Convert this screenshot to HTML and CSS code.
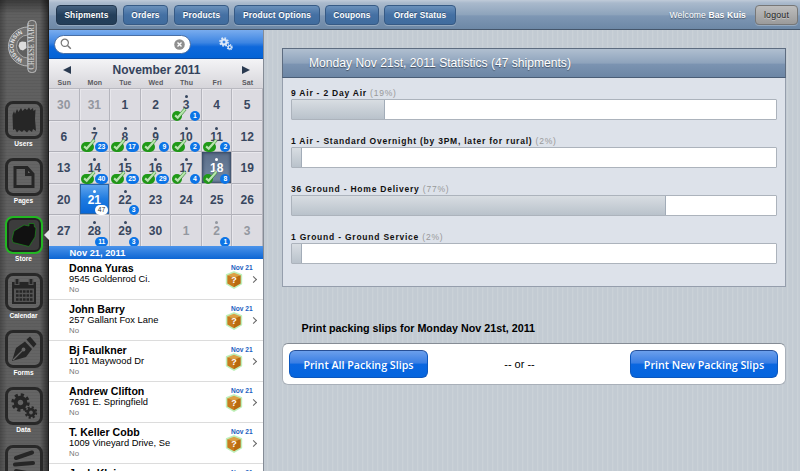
FILE: index.html
```html
<!DOCTYPE html>
<html lang="en">
<head>
<meta charset="utf-8">
<title>Shipments</title>
<link rel="stylesheet" href="styles.css">
</head>
<body>
<svg class="defs" width="0" height="0" aria-hidden="true">
  <defs>
    <symbol id="check" viewBox="0 0 15 13">
      <path d="M2.2 8.2 L5 10.6 L13.2 1" fill="none" stroke="#2d7a2a" stroke-width="3.4"/>
      <path d="M2.2 8 L5 10.4 L13.2 1" fill="none" stroke="#b5e6ab" stroke-width="2.4"/>
    </symbol>
    <symbol id="gear" viewBox="-10 -10 20 20">
      <circle r="5" fill="none" stroke="currentColor" stroke-width="4.2"/>
      <circle r="8" fill="none" stroke="currentColor" stroke-width="3.4" stroke-dasharray="3.3 2.983"/>
    </symbol>
    <symbol id="box" viewBox="0 0 20 20">
      <path d="M10 1.2 L18 4.4 V14 L10 18.8 L2 14 V4.4 Z" fill="#8fe08a" stroke="#a9eba4" stroke-width="2.2" stroke-linejoin="round" opacity=".75"/>
      <path d="M10 2 L17.4 4.8 L10 7.6 L2.6 4.8 Z" fill="#dda045"/>
      <path d="M2.6 4.8 L10 7.2 V18 L2.6 13.8 Z" fill="#c87a1c"/>
      <path d="M17.4 4.8 L10 7.2 V18 L17.4 13.8 Z" fill="#b9690f"/>
    </symbol>
  </defs>
</svg>

<div class="app">
  <nav class="side">
    <svg class="logo" viewBox="0 0 48 101" width="48" height="101">
      <path d="M28 27 A19.5 19.500 0 0 0 28 66 Z" fill="#727272" stroke="#b9b9b9" stroke-width="1"/>
      <path d="M28 35 A11.5 11.5 0 0 0 28 58 Z" fill="#606060" stroke="#b5b5b5" stroke-width=".8"/>
      <path d="M18.500 46 L19.500 42.500 L22 41.500 L26 42 L26.500 48 L23 50.500 L20 49.500 Z" fill="#dcdcdc"/>
      <rect x="27.8" y="20.5" width="8.4" height="52" rx="3.5" fill="#6c6c6c" stroke="#bdbdbd" stroke-width="1"/>
      <path id="arc" d="M27 60 A13.500 13.500 0 0 1 27 33" fill="none"/>
      <text class="logo-arc"><textPath href="#arc" startOffset="50%" text-anchor="middle">WISCONSIN</textPath></text>
      <text class="logo-text" transform="translate(34.4 46.5) rotate(-90)" text-anchor="middle" textLength="46" lengthAdjust="spacingAndGlyphs">CHEESE MART</text>
    </svg>
    <a class="side-item"><span class="tile"><svg viewBox="0 0 38 38"><path d="M8 29 L7.500 14 L9 10 L10 13 L12 8 L13.500 11 L16 7 L17.500 10 L20 7.500 L22 9 L24 6.500 L25.500 9 L28 7 L28.500 10 L30.500 8.500 L30 18 L31 30 L28 28 L27 31 L24 29 L22 31.500 L19 29 L17 31 L14 29 L12 31.500 L10 28 Z" fill="#262626"/></svg></span><span class="side-label">Users</span></a>
    <a class="side-item"><span class="tile"><svg viewBox="0 0 38 38"><path d="M10 9.500 H22 L28 16 V28.500 H10 Z M21.500 9.500 V16.500 H28" fill="none" stroke="#262626" stroke-width="3"/></svg></span><span class="side-label">Pages</span></a>
    <a class="side-item active"><span class="tile"><svg viewBox="0 0 38 38"><path d="M7 23 L9 15 L19 9 L24 10 L24 7.500 H29 L29.500 11 L31 12 L30 21 L24 30.500 L8 26.500 Z" fill="#111" stroke="#1a8a1a" stroke-width=".7"/></svg></span><span class="side-label">Store</span></a>
    <a class="side-item"><span class="tile"><svg viewBox="0 0 38 38"><path d="M7 9 H31 V31 H7 Z" fill="#262626"/><path d="M9 15.500 H29 V29 H9 Z" fill="#555"/><path d="M12 6 V12 M26 6 V12" stroke="#555" stroke-width="5"/><path d="M12 6 V11 M26 6 V11" stroke="#262626" stroke-width="2.6"/><path d="M11 18.500 H27.500 M11 22.500 H27.500 M11 26.500 H27.500" stroke="#262626" stroke-width="2.4" stroke-dasharray="2.600 .9"/></svg></span><span class="side-label">Calendar</span></a>
    <a class="side-item"><span class="tile"><svg viewBox="0 0 38 38"><path d="M7 31 L11 18 L20 11.500 L27 19 L21 27 Z" fill="#262626"/><path d="M21.500 9.500 L25 6.500 L31.500 14 L28.500 17.500 Z" fill="#262626"/><path d="M8 30 L17.500 20.500" stroke="#666" stroke-width="1.300"/><circle cx="18.500" cy="19.500" r="1.900" fill="#666"/></svg></span><span class="side-label">Forms</span></a>
    <a class="side-item"><span class="tile"><svg viewBox="0 0 38 38" color="#262626"><use href="#gear" x="6" y="6" width="19" height="19"/><use href="#gear" x="19.500" y="19" width="13" height="13"/></svg></span><span class="side-label">Data</span></a>
    <a class="side-item"><span class="tile"><svg viewBox="0 0 38 38"><path d="M11 13 L27 7.500 M10 19.500 L28 18 M11 26 L27 29" stroke="#262626" stroke-width="4" stroke-linecap="round"/></svg></span></a>
    <span class="pointer"></span>
  </nav>

  <div class="page">
    <header class="top">
      <a class="tab current w61">Shipments</a>
      <a class="tab w45">Orders</a>
      <a class="tab w55">Products</a>
      <a class="tab w85">Product Options</a>
      <a class="tab w54">Coupons</a>
      <a class="tab w71">Order Status</a>
      <span class="welcome">Welcome <b>Bas Kuis</b></span>
      <a class="logout">logout</a>
    </header>

    <div class="body">
      <section class="left">
        <div class="search">
          <div class="field">
            <svg width="12" height="12" viewBox="0 0 12 12"><circle cx="4.800" cy="4.800" r="3.600" fill="none" stroke="#777" stroke-width="1.200"/><path d="M7.500 7.500 L10.800 10.800" stroke="#777" stroke-width="1.500"/></svg>
            <svg width="11" height="11" viewBox="0 0 11 11"><circle cx="5.500" cy="5.500" r="5.300" fill="#8f8f8f"/><path d="M3.500 3.500 L7.500 7.500 M7.500 3.500 L3.500 7.500" stroke="#fff" stroke-width="1.400"/></svg>
          </div>
          <svg class="gears" width="14" height="14" viewBox="0 0 14 14"><use href="#gear" x="0" y="0" width="10" height="10"/><use href="#gear" x="7.500" y="7" width="6.500" height="6.500"/></svg>
        </div>

        <div class="cal-head">
          <div class="month"><span class="arrow prev"></span><span>November 2011</span><span class="arrow next"></span></div>
          <div class="days"><span>Sun</span><span>Mon</span><span>Tue</span><span>Wed</span><span>Thu</span><span>Fri</span><span>Sat</span></div>
        </div>

        <div class="grid">
          <div class="d out">30</div><div class="d out">31</div><div class="d">1</div><div class="d">2</div>
          <div class="d dot">3<i class="done one"><svg><use href="#check"/></svg></i><em>1</em></div><div class="d">4</div><div class="d">5</div>

          <div class="d">6</div>
          <div class="d dot">7<i class="done"><svg><use href="#check"/></svg></i><em>23</em></div>
          <div class="d dot">8<i class="done"><svg><use href="#check"/></svg></i><em>17</em></div>
          <div class="d dot">9<i class="done"><svg><use href="#check"/></svg></i><em>9</em></div>
          <div class="d dot">10<i class="done"><svg><use href="#check"/></svg></i><em>2</em></div>
          <div class="d dot">11<i class="done"><svg><use href="#check"/></svg></i><em>2</em></div>
          <div class="d">12</div>

          <div class="d">13</div>
          <div class="d dot">14<i class="done"><svg><use href="#check"/></svg></i><em>40</em></div>
          <div class="d dot">15<i class="done"><svg><use href="#check"/></svg></i><em>25</em></div>
          <div class="d dot">16<i class="done"><svg><use href="#check"/></svg></i><em>29</em></div>
          <div class="d dot">17<i class="done one"><svg><use href="#check"/></svg></i><em>4</em></div>
          <div class="d dot today">18<i class="done one"><svg><use href="#check"/></svg></i><em>8</em></div>
          <div class="d">19</div>

          <div class="d">20</div>
          <div class="d dot picked">21<em>47</em></div>
          <div class="d dot">22<em>3</em></div>
          <div class="d">23</div><div class="d">24</div><div class="d">25</div><div class="d">26</div>

          <div class="d">27</div>
          <div class="d dot">28<em>11</em></div>
          <div class="d dot">29<em>3</em></div>
          <div class="d">30</div><div class="d out">1</div>
          <div class="d dot out">2<em>1</em></div>
          <div class="d out">3</div>
        </div>

        <div class="date-bar">Nov 21, 2011</div>
        <div class="list">
          <div class="row"><div class="who"><b>Donna Yuras</b><span>9545 Goldenrod Ci.</span><small>No</small></div><div class="when">Nov 21<span class="pkg"><svg><use href="#box"/></svg><q>?</q></span></div><span class="chev"></span></div>
          <div class="row"><div class="who"><b>John Barry</b><span>257 Gallant Fox Lane</span><small>No</small></div><div class="when">Nov 21<span class="pkg"><svg><use href="#box"/></svg><q>?</q></span></div><span class="chev"></span></div>
          <div class="row"><div class="who"><b>Bj Faulkner</b><span>1101 Maywood Dr</span><small>No</small></div><div class="when">Nov 21<span class="pkg"><svg><use href="#box"/></svg><q>?</q></span></div><span class="chev"></span></div>
          <div class="row"><div class="who"><b>Andrew Clifton</b><span>7691 E. Springfield</span><small>No</small></div><div class="when">Nov 21<span class="pkg"><svg><use href="#box"/></svg><q>?</q></span></div><span class="chev"></span></div>
          <div class="row"><div class="who"><b>T. Keller Cobb</b><span>1009 Vineyard Drive, Se</span><small>No</small></div><div class="when">Nov 21<span class="pkg"><svg><use href="#box"/></svg><q>?</q></span></div><span class="chev"></span></div>
          <div class="row"><div class="who"><b>Josh Klein</b></div><div class="when">Nov 21</div></div>
        </div>
      </section>

      <main class="main">
        <section class="panel">
          <h1>Monday Nov 21st, 2011 Statistics (47 shipments)</h1>
          <div class="stats">
            <div class="stat"><p>9 Air - 2 Day Air <span>(19%)</span></p><div class="bar"><div class="fill" style="width:19.2%"></div></div></div>
            <div class="stat"><p>1 Air - Standard Overnight (by 3PM, later for rural) <span>(2%)</span></p><div class="bar"><div class="fill" style="width:2.1%"></div></div></div>
            <div class="stat"><p>36 Ground - Home Delivery <span>(77%)</span></p><div class="bar"><div class="fill" style="width:77.2%"></div></div></div>
            <div class="stat"><p>1 Ground - Ground Service <span>(2%)</span></p><div class="bar"><div class="fill" style="width:2.1%"></div></div></div>
          </div>
        </section>
        <h2>Print packing slips for Monday Nov 21st, 2011</h2>
        <div class="slips">
          <a class="btn all">Print All Packing Slips</a>
          <span class="or">-- or --</span>
          <a class="btn new">Print New Packing Slips</a>
        </div>
      </main>
    </div>
  </div>
</div>
</body>
</html>
```
FILE: styles.css
```css
* { box-sizing: border-box; }
body {
  margin: 0;
  width: 800px;
  height: 471px;
  overflow: hidden;
  font-family: "Liberation Sans", Arial, sans-serif;
  color: #000;
}
.defs { position: absolute; }
.app { display: flex; width: 800px; height: 471px; overflow: hidden; }

/* Sidebar */
.side {
  position: relative;
  flex: none;
  width: 49px;
  height: 471px;
  border-right: 1px solid #1d1d1d;
  background:
    linear-gradient(rgba(0,0,0,.4), rgba(0,0,0,0) 14px),
    linear-gradient(90deg, rgba(0,0,0,.25), rgba(0,0,0,0) 7px 40px, rgba(0,0,0,.5)),
    repeating-linear-gradient(0deg, rgba(0,0,0,.03) 0 1px, rgba(255,255,255,.01) 1px 3px),
    #5e5e5e;
}
.logo { display: block; }
.logo-text { font-size: 7.5px; font-family: "Liberation Serif", serif; fill: #e0e0e0; }
.logo-arc { font-size: 5.8px; font-weight: bold; fill: #e2e2e2; }
.side-item { display: block; height: 57.3px; width: 47px; }
.tile {
  display: block;
  width: 38px;
  height: 38px;
  margin-left: 5px;
  border: 3px solid #282828;
  border-radius: 8px;
  background: rgba(255,255,255,.03);
}
.tile svg { display: block; width: 38px; height: 38px; margin: -3px; }
.active .tile { border: 2px solid #22b822; background: #3c3c3c; box-shadow: inset 0 0 0 2px #222; }
.active .tile svg { margin: -2px; }
.side-label {
  display: block;
  margin-top: 1px;
  text-align: center;
  font-size: 6.6px;
  line-height: 8px;
  font-weight: bold;
  color: #fff;
}
.pointer {
  position: absolute;
  right: -1px;
  top: 230px;
  border: 5px solid transparent;
  border-left-width: 0;
  border-right-color: #e4e5e9;
}

/* Top bar */
.page { flex: 1; min-width: 0; }
.top {
  display: flex;
  align-items: flex-start;
  height: 30px;
  padding: 5px 2px 0 7px;
  border-bottom: 1px solid #45566b;
  background: linear-gradient(#c0cbd9 0, #a9b9cc 3px, #8ea4bc 50%, #7e97b4 55%, #6d88a6);
}
.tab, .logout {
  flex: none;
  height: 20px;
  border: 1px solid #365a85;
  border-radius: 4px;
  background: linear-gradient(#6a90bb, #4470a3 50%, #406c9e);
  box-shadow: 0 1px 0 rgba(255,255,255,.25);
  color: #fff;
  text-align: center;
  font-size: 8.3px;
  line-height: 18px;
  font-weight: bold;
  letter-spacing: .2px;
  white-space: nowrap;
  text-shadow: 0 -1px 0 rgba(0,0,0,.35);
  margin-right: 6px;
}
.current { background: linear-gradient(#45617f, #233f5b 50%, #243e58); border-color: #21374f; }
.w61 { width: 61px; }
.w45 { width: 45px; }
.w55 { width: 55px; margin-right: 5px; }
.w85 { width: 86px; margin-right: 5px; }
.w54 { width: 54px; margin-right: 5px; }
.w71 { width: 72px; }
.welcome {
  margin-left: auto;
  margin-right: 9px;
  font-size: 8.6px;
  line-height: 20px;
  color: #fff;
  letter-spacing: .1px;
  text-shadow: 0 1px 1px rgba(0,0,0,.4);
}
.logout {
  width: 43px;
  margin-right: 0;
  border-color: #777;
  background: linear-gradient(#bdbdbd, #9b9b9b);
  color: #222;
  font-weight: normal;
  font-size: 8.8px;
  text-shadow: 0 1px 0 rgba(255,255,255,.4);
}

/* Left column */
.body { display: flex; height: 441px; }
.left { flex: none; width: 215px; background: #fff; border-right: 1px solid #858c96; overflow: hidden; }
.search {
  display: flex;
  align-items: center;
  height: 29px;
  padding-left: 5px;
  border-bottom: 1px solid #0a4da8;
  background: linear-gradient(#79acee, #3d85e2 45%, #0e68db 60%, #0363d6);
}
.field {
  display: flex;
  align-items: center;
  justify-content: space-between;
  width: 137px;
  height: 19px;
  padding: 0 5px 0 5px;
  border: 1px solid #4a6fa5;
  border-radius: 10px;
  background: #fff;
}
.gears { margin-left: 28px; color: #dce8f8; }
.cal-head { height: 30px; background: linear-gradient(#f4f4f6, #d6d5da); border-bottom: 1px solid #b9b9c0; }
.month {
  display: flex;
  align-items: center;
  justify-content: space-between;
  height: 21px;
  padding: 1px 13px 0 14px;
  font-size: 12px;
  font-weight: bold;
  color: #34435c;
}
.arrow { border: 4.5px solid transparent; }
.prev { border-right: 8px solid #2a3a50; border-left: 0; }
.next { border-left: 8px solid #2a3a50; border-right: 0; }
.days { display: grid; grid-template-columns: repeat(7, 1fr); }
.days span { text-align: center; font-size: 7px; line-height: 8px; margin-top: -1px; font-weight: bold; color: #5a5a60; letter-spacing: .1px; }
.grid { display: grid; grid-template-columns: repeat(7, 1fr); grid-template-rows: repeat(5, 31.5px); height: 157px; overflow: hidden; }
.d {
  position: relative;
  border-right: 1px solid #b5b5bd;
  border-bottom: 1px solid #b0b0b8;
  background: #dcdbe1;
  box-shadow: inset 1px 1px 0 #e8e7ec;
  text-align: center;
  font-size: 12px;
  font-weight: bold;
  line-height: 33px;
  color: #38475f;
}
.out { color: #93979f; }
.dot::before {
  content: "";
  position: absolute;
  left: 13.5px;
  top: 6px;
  width: 3px;
  height: 3px;
  border-radius: 50%;
  background: currentColor;
}
.d em {
  position: absolute;
  right: 1px;
  bottom: -1px;
  min-width: 10px;
  height: 10px;
  padding: 0 2.8px;
  border-radius: 5px;
  background: #0c74e6;
  color: #fff;
  font-style: normal;
  font-size: 6.8px;
  line-height: 10px;
}
.done {
  position: absolute;
  left: 1px;
  bottom: -1px;
  width: 13px;
  height: 10px;
  border-radius: 5px;
  background: #1f9a16;
}
.done.one { width: 10px; }
.done svg { position: absolute; left: 1px; bottom: 1px; width: 14px; height: 12px; }
.today { background: linear-gradient(#5a6d88, #7489a4); box-shadow: inset 0 0 3px 1px #34455f; color: #fff; }
.picked { background: linear-gradient(#65a8ee, #1f7be0 50%, #0767d8); box-shadow: inset 0 0 0 1px #2764a8; color: #fff; }
.picked em { background: #fff; color: #333; font-weight: normal; }

.date-bar {
  height: 13px;
  padding-left: 20.5px;
  background: linear-gradient(#4b93ea, #0d66d3);
  color: #fff;
  font-size: 9.3px;
  line-height: 14px;
  font-weight: bold;
}
.row { position: relative; display: flex; height: 41px; padding: 3px 0 0 20px; border-bottom: 1px solid #dcdcdc; background: #fff; }
.who { flex: 1; min-width: 0; white-space: nowrap; }
.who b, .who span, .who small { display: block; }
.who b { font-size: 10.6px; line-height: 12px; }
.who span { font-size: 9.35px; line-height: 11px; }
.who small { font-size: 7.8px; line-height: 10px; color: #777; }
.when { width: 22px; margin-right: 10px; font-size: 6.6px; line-height: 11px; font-weight: bold; color: #2360c0; white-space: nowrap; }
.pkg { position: relative; display: block; width: 18px; height: 18px; margin: -2px 0 0 -6px; }
.pkg svg { display: block; width: 18px; height: 18px; }
.pkg q { position: absolute; inset: 0; text-align: center; font-size: 9px; line-height: 19px; color: #fff; quotes: none; }
.pkg q::before, .pkg q::after { content: none; }
.chev { position: absolute; right: 7.5px; top: 18px; width: 5px; height: 5px; border: solid #666; border-width: 1.5px 1.5px 0 0; transform: rotate(45deg); }

/* Content */
.main {
  flex: 1;
  padding: 18px 14px 0 18px;
  background: repeating-linear-gradient(90deg, #c3cbd3 0 3px, #cad1d7 3px 4px, #c5cdd4 4px 5px);
}
.panel { height: 239px; border: 1px solid #959eac; background: #dde2ea; }
h1 {
  height: 30px;
  margin: -1px -1px 0;
  padding-left: 26px;
  border: 1px solid #5d6c80;
  border-bottom-color: #4a5d76;
  background: linear-gradient(#b0bfd0, #8ea3bc 50%, #7b93b1 55%, #6c86a5);
  color: #fff;
  font-size: 12.1px;
  line-height: 29px;
  font-weight: normal;
  text-shadow: 0 1px 1px rgba(0,0,0,.45);
}
.stats { padding: 9px 8px 0; }
.stat { height: 48px; }
.stat p { margin: 0; height: 12px; font-size: 8.5px; line-height: 12px; font-weight: bold; letter-spacing: .78px; color: #111; white-space: nowrap; }
.stat p span { font-weight: normal; color: #999; }
.bar { height: 21px; border: 1px solid #acb3bc; border-radius: 1px; background: #fff; }
.fill { height: 100%; border-right: 1px solid #a2acb8; background: linear-gradient(#d8dde2, #b9c2cb); }
h2 { margin: 34px 0 0 19.5px; font-size: 10.75px; line-height: 14px; white-space: nowrap; }
.slips {
  display: flex;
  align-items: center;
  justify-content: space-between;
  height: 42px;
  margin-top: 8px;
  padding: 0 7px 1px 6px;
  border: 1px solid #a9b0b9;
  border-top: 1px solid #858c95;
  border-radius: 6px;
  background: #fff;
  font-size: 11px;
}
.or { margin-right: 19px; }
.btn {
  height: 28px;
  border: 1px solid #0c57be;
  border-top-color: #274f96;
  border-radius: 6px;
  background: linear-gradient(#6b9fec, #3b7fe4 45%, #0a66e0 52%, #0565de);
  color: #fff;
  text-align: center;
  font-family: "Open Sans", sans-serif;
  font-size: 10.7px;
  line-height: 28px;
  font-weight: 600;
  white-space: nowrap;
}
.all { width: 139px; }
.new { width: 148px; }
```
